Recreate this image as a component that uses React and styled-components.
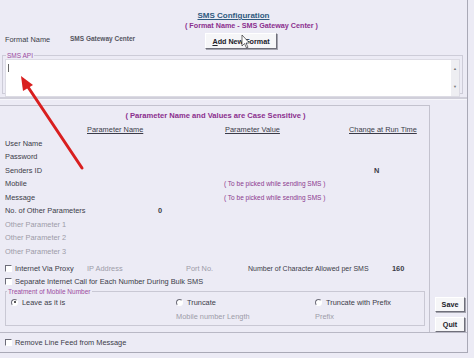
import styled, { createGlobalStyle } from 'styled-components'

const GlobalStyle = createGlobalStyle`
  html, body { margin: 0; background: #ecebf5; }
  body {
    font-family: "Liberation Sans", Arial, sans-serif;
    font-size: 7.4px;
    color: #3b3b48;
  }
`

const Window = styled.div`
  position: relative;
  width: 467px;
  height: 352px;
  border-right: 1px solid #a9a9b6;
  border-bottom: 1px solid #a9a9b6;
  background: #ecebf5;
  overflow: hidden;
  display: flex;
  flex-direction: column;
`

const Header = styled.div`
  padding-top: 11px;
  display: flex;
  flex-direction: column;
  align-items: center;
`

const Title = styled.div`
  font-size: 8px;
  font-weight: bold;
  color: #2f5a80;
  text-decoration: underline;
  line-height: 10px;
`

const Subtitle = styled.div`
  margin-left: 36px;
  font-size: 7.2px;
  font-weight: bold;
  color: #8b2f8e;
  line-height: 9px;
`

const FormatRow = styled.div`
  display: flex;
  align-items: flex-start;
  height: 19px;
  padding-left: 5px;
  margin-top: 3px;
`

const Label = styled.span`
  width: ${p => p.w || 'auto'};
  flex: none;
  color: ${p => p.color || '#3b3b48'};
  font-weight: ${p => (p.bold ? 'bold' : 'normal')};
  font-size: ${p => p.size || '7.4px'};
  line-height: 10px;
  padding-top: ${p => p.top || '0'};
  white-space: nowrap;
`

const Button = styled.div`
  width: ${p => p.w};
  height: ${p => p.h};
  box-sizing: border-box;
  display: flex;
  align-items: center;
  justify-content: center;
  background: #f6f6f8;
  border: 1px solid #ffffff;
  border-right-color: #6f6f7a;
  border-bottom-color: #6f6f7a;
  box-shadow: 1px 1px 0 #a4a4ae;
  font-weight: bold;
  font-size: 7.2px;
  color: #202028;
`

const ApiSet = styled.fieldset`
  margin: 0 4px 0 2px;
  padding: 0 2px 2px;
  border: 1px solid #cdccd8;
  height: 38px;
  box-sizing: content-box;
`

const Legend = styled.legend`
  padding: 0 1px;
  margin-left: 1px;
  font-size: 6.5px;
  line-height: 7px;
  color: #9b4aa0;
`

const ApiBox = styled.div`
  display: flex;
  height: 36px;
  background: #ffffff;
  border: 1px solid #dcdbe4;
`

const Caret = styled.div`
  width: 1px;
  height: 8px;
  margin: 4px 0 0 2px;
  background: #666;
`

const Scroll = styled.div`
  margin-left: auto;
  width: 8px;
  background: #eeeef2;
  display: flex;
  flex-direction: column;
  justify-content: space-between;
  align-items: center;
  padding: 6px 0 7px;
  font-size: 4px;
  color: #777;
`

const Separator = styled.div`
  margin-top: 3px;
  height: 2px;
  background: #d0cfda;
  border-bottom: 1px solid #f6f6fb;
`

const Main = styled.div`
  display: flex;
  margin-top: 5px;
  height: 227px;
`

const ParamBox = styled.div`
  width: 429px;
  border-top: 1px solid #c3c2ce;
  border-right: 1px solid #c3c2ce;
  display: flex;
  flex-direction: column;
`

const SideCol = styled.div`
  flex: 1;
  display: flex;
  flex-direction: column;
  align-items: flex-start;
  justify-content: flex-end;
  gap: 5px;
  padding: 0 0 0 5px;
`

const Caption = styled.div`
  text-align: center;
  margin: 5px 0 0 2px;
  font-size: 7.6px;
  font-weight: bold;
  color: #8b2f8e;
  line-height: 10px;
`

const Grid = styled.div`
  display: grid;
  grid-template-columns: 81px 138px 121px 1fr;
  grid-auto-rows: 13.5px;
  align-items: center;
  padding-left: 5px;
  margin-top: 2px;
`

const Head = styled.span`
  text-decoration: underline;
  color: #3b3b48;
  white-space: nowrap;
  padding-left: ${p => p.pl || '0'};
`

const Cell = styled.span`
  white-space: nowrap;
  padding-left: ${p => p.pl || '0'};
  font-weight: ${p => (p.bold ? 'bold' : 'normal')};
  color: ${p => (p.dim ? '#9c9ba8' : p.purple ? '#8b3a8e' : '#3b3b48')};
  font-size: ${p => p.size || '7.4px'};
`

const CheckRow = styled.div`
  display: grid;
  grid-template-columns: ${p => p.cols || '1fr'};
  align-items: center;
  height: 13px;
  padding-left: 5px;
  margin-top: ${p => p.mt || '0'};
`

const CheckItem = styled.span`
  display: flex;
  align-items: center;
  gap: 3px;
  white-space: nowrap;
`

const Box = styled.span`
  width: 5px;
  height: 5px;
  flex: none;
  background: #ffffff;
  border: 1px solid #ffffff;
  border-top-color: #6c6c78;
  border-left-color: #6c6c78;
`

const Radio = styled.span`
  width: 5px;
  height: 5px;
  flex: none;
  border-radius: 50%;
  background: #ffffff;
  border: 1px solid #fff;
  border-top-color: #6c6c78;
  border-left-color: #6c6c78;
  display: flex;
  align-items: center;
  justify-content: center;
  margin-right: 1px;
  &::after {
    content: '';
    width: 2px;
    height: 2px;
    border-radius: 50%;
    background: ${p => (p.on ? '#222' : 'transparent')};
  }
`

const TreatSet = styled.fieldset`
  margin: 0 4px 0 5px;
  padding: 1px 0 1px;
  border: 1px solid #c9c8d4;
`

const TreatGrid = styled.div`
  display: grid;
  grid-template-columns: 165px 139px 1fr;
  grid-template-rows: 12px 16px;
  align-items: center;
  padding-left: 5px;
`

const Bottom = styled.div`
  border-top: 1px solid #b9b8c5;
  display: flex;
  align-items: center;
  height: 18px;
  padding-left: 5px;
`

const Overlay = styled.svg`
  position: absolute;
  left: 0;
  top: 0;
  pointer-events: none;
`

const params = [
  { name: 'User Name' },
  { name: 'Password' },
  { name: 'Senders ID', change: 'N' },
  { name: 'Mobile', value: '( To be picked while sending SMS )' },
  { name: 'Message', value: '( To be picked while sending SMS )' },
  { name: 'No. of Other Parameters', count: '0' },
  { name: 'Other Parameter 1', dim: true },
  { name: 'Other Parameter 2', dim: true },
  { name: 'Other Parameter 3', dim: true },
]

export default function App() {
  return (
    <Window>
      <GlobalStyle />
      <Header>
        <Title>SMS Configuration</Title>
        <Subtitle>( Format Name - SMS Gateway Center )</Subtitle>
      </Header>
      <FormatRow>
        <Label w="65px" top="2px">Format Name</Label>
        <Label w="135px" bold size="6.5px" top="1px" color="#55555f">SMS Gateway Center</Label>
        <Button w="72px" h="16px"><span><u>A</u>dd New Format</span></Button>
      </FormatRow>
      <ApiSet>
        <Legend>SMS API</Legend>
        <ApiBox>
          <Caret />
          <Scroll><span>▲</span><span>▼</span></Scroll>
        </ApiBox>
      </ApiSet>
      <Separator />
      <Main>
        <ParamBox>
          <Caption>( Parameter Name and Values are Case Sensitive )</Caption>
          <Grid>
            <span />
            <Head pl="1px">Parameter Name</Head>
            <Head pl="1px">Parameter Value</Head>
            <Head pl="4px">Change at Run Time</Head>
            {params.map(p => (
              <>
                <Cell key={p.name} dim={p.dim}>{p.name}</Cell>
                <Cell bold pl="72px">{p.count || ''}</Cell>
                <Cell purple size="6.5px">{p.value || ''}</Cell>
                <Cell bold pl="29px">{p.change || ''}</Cell>
              </>
            ))}
          </Grid>
          <CheckRow cols="82px 99px 62px 144px 1fr" mt="4px">
            <CheckItem><Box />Internet Via Proxy</CheckItem>
            <Cell dim>IP Address</Cell>
            <Cell dim>Port No.</Cell>
            <Cell size="7px">Number of Character Allowed per SMS</Cell>
            <Cell bold>160</Cell>
          </CheckRow>
          <CheckRow>
            <CheckItem><Box />Separate Internet Call for Each Number During Bulk SMS</CheckItem>
          </CheckRow>
          <TreatSet>
            <Legend>Treatment of Mobile Number</Legend>
            <TreatGrid>
              <CheckItem><Radio on />Leave as it is</CheckItem>
              <CheckItem><Radio />Truncate</CheckItem>
              <CheckItem><Radio />Truncate with Prefix</CheckItem>
              <span />
              <Cell dim>Mobile number Length</Cell>
              <Cell dim>Prefix</Cell>
            </TreatGrid>
          </TreatSet>
        </ParamBox>
        <SideCol>
          <Button w="30px" h="15px">Save</Button>
          <Button w="30px" h="15px">Quit</Button>
        </SideCol>
      </Main>
      <Bottom>
        <CheckItem><Box />Remove Line Feed from Message</CheckItem>
      </Bottom>
      <Overlay width="120" height="180" viewBox="0 0 120 180">
        <line x1="82" y1="168" x2="26" y2="84" stroke="#d91f1f" strokeWidth="3" strokeLinecap="round" />
        <polygon points="21,76 33,85 23,91" fill="#d91f1f" />
      </Overlay>
      <Overlay width="474" height="60" viewBox="0 0 474 60">
        <path d="M242 35 L242 46 L244.5 43.5 L246.5 48 L248 47.3 L246 43 L249.5 43 Z" fill="#fff" stroke="#333" strokeWidth="0.7" />
      </Overlay>
    </Window>
  )
}
